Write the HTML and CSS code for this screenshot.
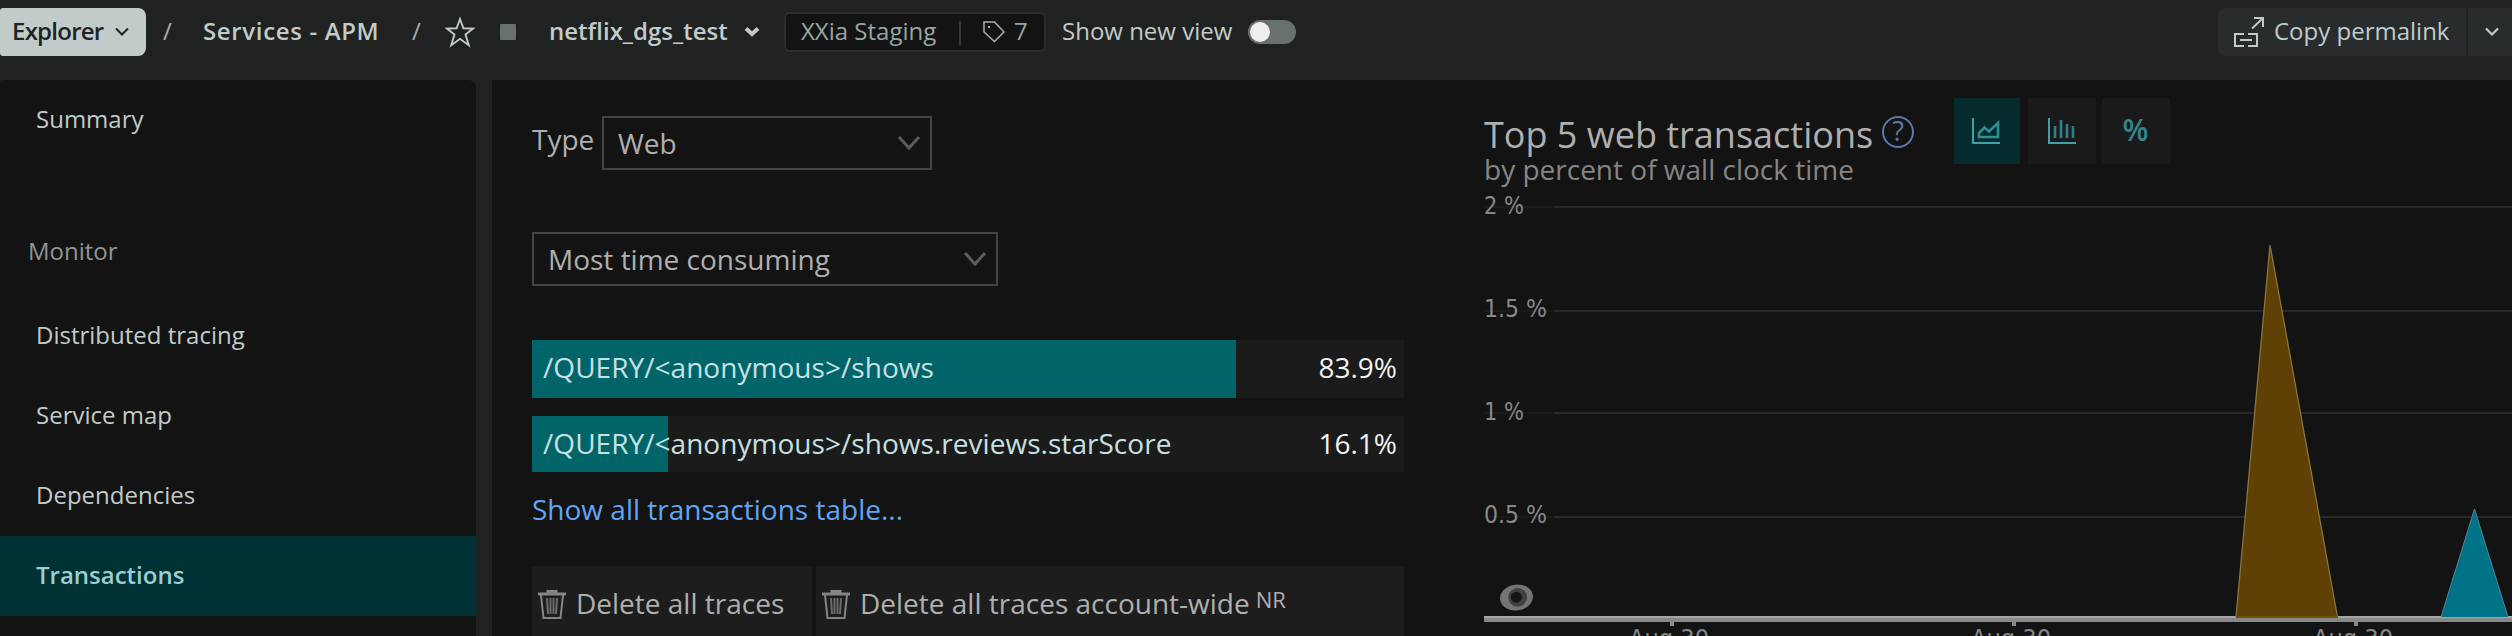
FILE: index.html
```html
<!DOCTYPE html>
<html lang="en">
<head>
<meta charset="utf-8">
<title>netflix_dgs_test - Transactions</title>
<link rel="stylesheet" href="styles.css">
</head>
<body>
<header class="topbar">
  <button class="explorer"><span>Explorer</span>
    <svg width="14" height="10" viewBox="0 0 14 10"><path d="M1 1.5 7 7.5 13 1.5" fill="none" stroke="#1d2424" stroke-width="2"/></svg>
  </button>
  <span class="slash slash-a">/</span>
  <span class="crumb">Services - APM</span>
  <span class="slash slash-b">/</span>
  <svg class="star" width="32" height="32" viewBox="0 0 32 32"><path d="M16 3 19.4 12.3 29 12.6 21.5 18.6 24.8 29.2 16 22.8 7.2 29.2 10.5 18.6 3 12.6 12.6 12.3Z" fill="none" stroke="#c1cbc9" stroke-width="1.9"/></svg>
  <span class="status"></span>
  <span class="entity">netflix_dgs_test</span>
  <svg class="entity-caret" width="16" height="12" viewBox="0 0 16 12"><path d="M2 2.500 8 8 14 2.500" fill="none" stroke="#c1cbc9" stroke-width="4"/></svg>
  <div class="pill">
    <span class="account">XXia Staging</span>
    <span class="pill-line"></span>
    <svg class="tag" width="22" height="22" viewBox="0 0 22 22"><path d="M1 1H11.500L21 11 11.500 20.500 1 11Z" fill="none" stroke="#a3b4b2" stroke-width="1.5"/><rect x="5" y="5" width="2" height="2" fill="#a3b4b2"/></svg>
    <span class="count">7</span>
  </div>
  <span class="newview">Show new view</span>
  <span class="toggle"><span class="knob"></span></span>
  <div class="permalink">
    <button class="copy">
      <svg width="30" height="30" viewBox="0 0 30 30" fill="none" stroke="#c1cbc9" stroke-width="2"><path d="M10 17H1V29H10M14 17H23V29H14M6 23H18M18 11.500 28.500 1.500M20 1H29V10"/></svg>
      <span>Copy permalink</span>
    </button>
    <button class="more"><svg width="14" height="10" viewBox="0 0 14 10"><path d="M1 1.500 7 7.500 13 1.500" fill="none" stroke="#c1cbc9" stroke-width="2.200"/></svg></button>
  </div>
</header>
<div class="body">
  <nav class="sidebar">
    <a class="item">Summary</a>
    <div class="group">Monitor</div>
    <a class="item">Distributed tracing</a>
    <a class="item">Service map</a>
    <a class="item">Dependencies</a>
    <a class="item active">Transactions</a>
  </nav>
  <main class="main">
    <section class="list">
      <div class="type-row">
        <label>Type</label>
        <div class="select web"><span>Web</span><svg width="24" height="16" viewBox="0 0 24 16"><path d="M2 2 12 13 22 2" fill="none" stroke="#5c5c5c" stroke-width="3"/></svg></div>
      </div>
      <div class="select sort"><span>Most time consuming</span><svg width="24" height="16" viewBox="0 0 24 16"><path d="M2 2 12 13 22 2" fill="none" stroke="#5c5c5c" stroke-width="3"/></svg></div>
      <div class="bar first" style="--share:704px"><span>/QUERY/&lt;anonymous&gt;/shows</span><b>83.9%</b></div>
      <div class="bar" style="--share:136px"><span>/QUERY/&lt;anonymous&gt;/shows.reviews.starScore</span><b>16.1%</b></div>
      <a class="showall">Show all transactions table...</a>
      <div class="actions">
        <button class="delete own"><svg class="trash" width="28" height="30" viewBox="0 0 28 30" fill="none" stroke="#858585" stroke-width="2"><path d="M0 4H28" stroke-width="3"/><path d="M10 3V1.500H18V3" stroke-width="3"/><path d="M3 5 5.500 28H22.500L25 5"/><path d="M9 8 10 24M12.500 8V24M15.500 8V24M19 8 18 24" stroke="#6c6c6c"/></svg><span>Delete all traces</span></button>
        <button class="delete wide"><svg class="trash" width="28" height="30" viewBox="0 0 28 30" fill="none" stroke="#858585" stroke-width="2"><path d="M0 4H28" stroke-width="3"/><path d="M10 3V1.500H18V3" stroke-width="3"/><path d="M3 5 5.500 28H22.500L25 5"/><path d="M9 8 10 24M12.500 8V24M15.500 8V24M19 8 18 24" stroke="#6c6c6c"/></svg><span>Delete all traces account-wide</span><small>NR</small></button>
      </div>
    </section>
    <section class="chart">
      <div class="chart-head">
        <div class="titles">
          <h2>Top 5 web transactions</h2>
          <p>by percent of wall clock time</p>
        </div>
        <span class="help">?</span>
        <div class="modes">
          <button class="mode on"><svg width="28" height="26" viewBox="0 0 28 26" fill="none" stroke="#3fa0aa" stroke-width="2"><path d="M1 0V25H28"/><path d="M7 19V15L12.500 9.500 17 13.500 26 5V19Z" stroke="#2f8f93" stroke-width="2.600"/></svg></button>
          <button class="mode"><svg width="28" height="26" viewBox="0 0 28 26" fill="none" stroke="#3fa0aa" stroke-width="2"><path d="M1 0V25H28"/><path d="M7 8V20M13 2V20M19 6V20M25 8V20" stroke="#2f8088" stroke-width="2.600"/></svg></button>
          <button class="mode percent">%</button>
        </div>
      </div>
      <svg class="plot" width="1028" height="440" viewBox="1484 196 1028 440">
        <g fill="#1a1a1a"><rect x="1484" y="206" width="70" height="2"/><rect x="1484" y="310" width="70" height="2"/><rect x="1484" y="412" width="70" height="2"/><rect x="1484" y="516" width="70" height="2"/></g>
        <g fill="#282828"><rect x="1554" y="206" width="958" height="2"/><rect x="1554" y="310" width="958" height="2"/><rect x="1554" y="412" width="958" height="2"/><rect x="1554" y="516" width="958" height="2"/></g>
        <g class="axis">
          <text x="1484" y="214" textLength="40" lengthAdjust="spacingAndGlyphs">2 %</text>
          <text x="1484" y="317" textLength="63" lengthAdjust="spacingAndGlyphs">1.5 %</text>
          <text x="1484" y="420" textLength="40" lengthAdjust="spacingAndGlyphs">1 %</text>
          <text x="1484" y="523" textLength="63" lengthAdjust="spacingAndGlyphs">0.5 %</text>
          <text x="1629" y="647" textLength="80" lengthAdjust="spacingAndGlyphs">Aug 30</text>
          <text x="1971" y="647" textLength="80" lengthAdjust="spacingAndGlyphs">Aug 30</text>
          <text x="2313" y="647" textLength="80" lengthAdjust="spacingAndGlyphs">Aug 30</text>
        </g>
        <rect x="1484" y="616" width="1028" height="6" fill="#888"/>
        <rect x="1484" y="616.500" width="1028" height="1" fill="#c4c4c4"/>
        <g fill="#888"><rect x="1670" y="622" width="4" height="4"/><rect x="2012" y="622" width="4" height="4"/><rect x="2354" y="622" width="4" height="4"/></g>
        <path d="M2236 617.500 2270 245 2337.500 617.500Z" fill="#5f4005"/>
        <path d="M2236 617 2270 245 2337.500 617" fill="none" stroke="#8a743b" stroke-width="1.300"/>
        <rect x="2236" y="616" width="102" height="2" fill="#735205"/>
        <path d="M2441 617 2474.500 509 2508 617Z" fill="#007388"/>
        <path d="M2441 617 2474.500 509 2508 617" fill="none" stroke="#4e8792"/>
        <g transform="rotate(-8 1516.500 597.500)"><ellipse cx="1516.500" cy="597.500" rx="16.500" ry="13" fill="#747474"/></g>
        <circle cx="1517.700" cy="597.300" r="9.400" fill="#414141"/>
        <circle cx="1516.300" cy="597.200" r="5.500" fill="#161616"/>
      </svg>
    </section>
  </main>
</div>
</body>
</html>
```

FILE: styles.css
```css
* { box-sizing: border-box; }
body {
  margin: 0;
  width: 2512px;
  height: 636px;
  overflow: hidden;
  background: #1f2221;
  color: #c1cbc9;
  font: 24px/32px "Open Sans", "Noto Sans", sans-serif;
  white-space: nowrap;
}
button { border: 0; margin: 0; padding: 0; font: inherit; color: inherit; text-align: left; }
svg { display: block; flex: none; }

.topbar { display: flex; align-items: center; height: 80px; padding-bottom: 16px; }
.topbar span { line-height: 32px; }
.slash, .crumb, .entity, .newview, .account, .count, .explorer span, .copy span { padding-bottom: 2px; }
.explorer {
  display: flex; align-items: center; justify-content: space-between;
  width: 146px; height: 48px; padding: 0 17px 0 12px;
  background: #c1cbc9; color: #1d2424; border-radius: 3px 8px 8px 3px;
  font-weight: 600; letter-spacing: -0.75px;
}
.slash { color: #a5b0ae; width: 10px; font-weight: 500; }
.slash-a { margin-left: 17px; }
.slash-b { margin-left: 31px; }
.crumb { width: 178px; margin-left: 30px; font-weight: 600; letter-spacing: 0.65px; }
.star { margin-left: 22px; }
.status { width: 16px; height: 16px; margin-left: 24px; background: #687170; border-radius: 1px; }
.entity { width: 178px; margin-left: 33px; font-weight: 600; }
.entity-caret { margin-left: 17px; }
.pill {
  display: flex; align-items: center; width: 262px; height: 40px; margin-left: 24px; padding-left: 15px;
  background: #131313; border: 2px solid #292d2c; border-radius: 6px; color: #98a5a2;
}
.account { width: 137px; }
.pill-line { width: 2px; height: 24px; margin: 2px 0 0 21px; background: #333837; }
.tag { margin-left: 22px; }
.count { margin-left: 9px; }
.newview { width: 171px; margin-left: 16px; }
.toggle { display: flex; align-items: center; width: 48px; height: 24px; margin-left: 15px; padding-left: 2px; border-radius: 12px; background: #687170; }
.knob { width: 20px; height: 20px; border-radius: 50%; background: #eee; }
.permalink { display: flex; gap: 2px; margin-left: auto; }
.copy { display: flex; align-items: center; gap: 10px; width: 248px; height: 48px; padding-left: 16px; background: #282c2d; border-radius: 8px 0 0 8px; }
.more { width: 44px; height: 48px; padding-left: 17px; background: #282c2d; border-radius: 0 2px 2px 0; }

.body { display: flex; gap: 16px; height: 556px; }
.sidebar { width: 476px; background: #131313; border-radius: 3px 8px 0 0; }
.item { display: block; height: 80px; padding-left: 36px; line-height: 78px; }
.active { background: #003135; color: #9dcdd0; font-weight: 600; }
.group { height: 136px; padding: 75px 0 0 28px; line-height: 32px; color: #8e9594; }

.main { display: flex; flex: 1; background: #131313; }
.list { width: 912px; padding: 36px 0 0 40px; font-size: 28px; color: #afafaf; }
.type-row { display: flex; }
.type-row label { width: 70px; line-height: 46px; }
.select { display: flex; align-items: center; justify-content: space-between; height: 54px; padding: 0 9px 0 14px; border: 2px solid #444; }
.web { width: 330px; }
.sort { width: 466px; margin-top: 62px; }
.bar {
  display: flex; justify-content: space-between; height: 56px; line-height: 54px; padding: 0 7px 0 11px;
  background: linear-gradient(#006469, #006469) 0 0 / var(--share) 100% no-repeat #1b1b1b; color: #c6e0e2;
}
.bar.first { height: 58px; margin: 54px 0 18px; }
.bar b { color: #f2f2f2; font-weight: 400; }
.bar span { letter-spacing: 0.04px; }
.showall { display: block; margin-top: 15px; line-height: 44px; color: #5fa6f5; }
.actions { display: flex; gap: 4px; margin-top: 35px; }
.delete { display: flex; align-items: flex-start; height: 70px; padding: 17px 0 0 6px; line-height: 40px; background: #1d1d1d; }
.delete .trash { margin: 7px 10px 0 0; }
.own { width: 280px; }
.wide { width: 588px; }
.delete small { margin-left: 6px; font-size: 22px; line-height: 33px; }

.chart { flex: 1; padding: 18px 0 0 80px; }
.chart-head { display: flex; height: 98px; }
.titles { width: 390px; }
h2 { margin: 13px 0 0; font-size: 36px; line-height: 48px; font-weight: 400; color: #afafaf; }
.titles p { margin: -10px 0 0; font-size: 28px; line-height: 40px; color: #858585; }
.help { width: 32px; height: 32px; margin: 18px 0 0 8px; border: 2.5px solid #5e78ab; border-radius: 50%; color: #5e78ab; font-size: 27px; line-height: 26px; font-weight: 500; text-align: center; }
.modes { display: flex; margin-left: 40px; }
.mode { display: flex; align-items: center; justify-content: center; width: 68px; height: 66px; padding-right: 1px; background: #1a1a1a; margin-right: 6px; }
.mode.on { width: 66px; padding-right: 2px; background: #052b2d; margin-right: 8px; }
.percent { color: #32858b; font-size: 30px; font-weight: 600; padding-bottom: 2px; }
.axis { font: 24px "DejaVu Sans Condensed", "DejaVu Sans", sans-serif; fill: #888; }
```
